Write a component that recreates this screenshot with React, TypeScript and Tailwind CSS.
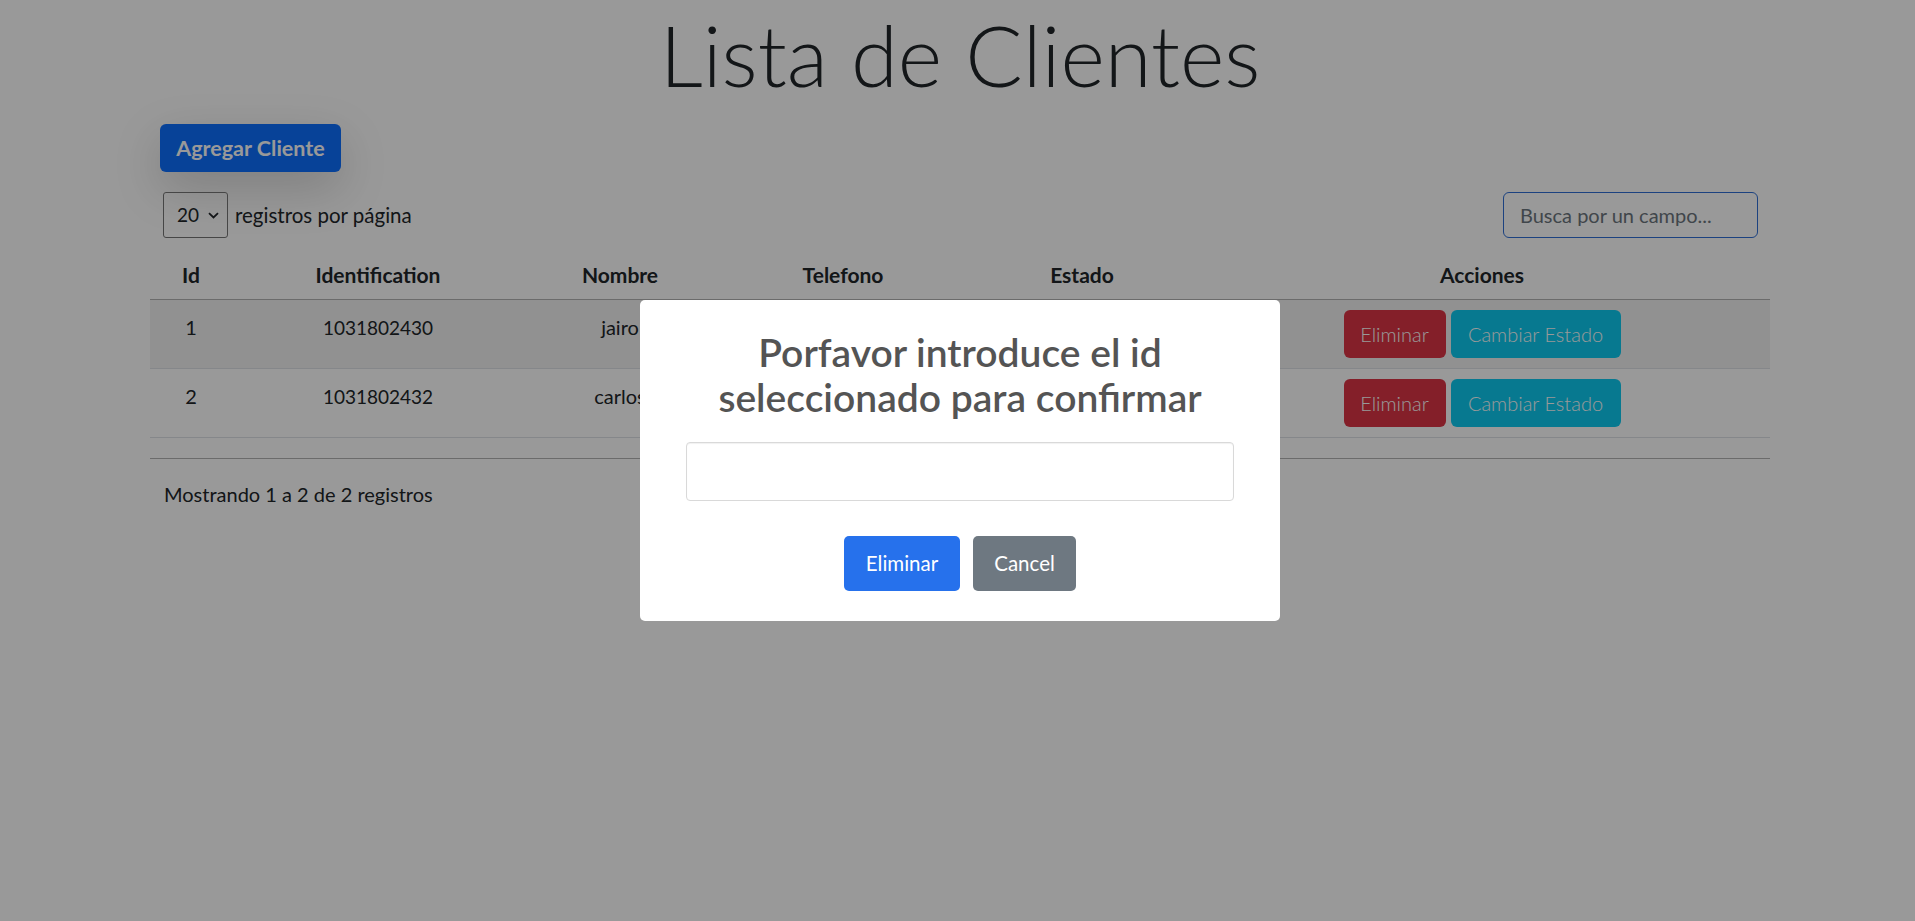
import React from 'react';

const rows = [
  { id: 1, ident: '1031802430', nombre: 'jairo' },
  { id: 2, ident: '1031802432', nombre: 'carlos' },
];

const cols = 'grid grid-cols-[82px_292px_192px_254px_224px_576px]';

export default function App() {
  return (
    <div className="relative min-h-screen bg-white text-[#212529] [font-family:Lato,'Open_Sans',sans-serif]">
      <div className="ml-[150px] w-[1620px]">
        <h1 className="mt-[3px] text-center text-[85px] font-light leading-[102px] text-[#212529]">
          Lista de Clientes
        </h1>

        <button className="ml-[10px] mt-[19px] h-[48px] w-[181px] rounded-[6px] bg-[#0d6efd] text-[21.5px] font-bold text-white shadow-[0_1rem_3rem_rgba(0,0,0,0.175)]">
          Agregar Cliente
        </button>

        <div className="mt-[20px] flex items-center justify-between pl-[13px] pr-[12px]">
          <div className="flex items-center gap-[7px]">
            <div className="flex h-[46px] w-[65px] items-center justify-between rounded-[3px] border border-[#767676] pl-[13px] pr-[8px] text-[19px]">
              <span>20</span>
              <svg width="11" height="7" viewBox="0 0 11 7" fill="none">
                <path d="M1 1.2 L5.5 5.5 L10 1.2" stroke="#212529" strokeWidth="1.8" />
              </svg>
            </div>
            <span className="text-[20.5px]">registros por página</span>
          </div>
          <div className="flex h-[46px] w-[255px] items-center rounded-[6px] border border-[#2f6fd6] px-[16px] text-[20px] text-[#6c757d]">
            Busca por un campo...
          </div>
        </div>

        <div className={`${cols} mt-[10px] h-[52px] border-b border-[#b3b3b3] pt-[13px] text-center text-[21px] font-bold leading-[28px]`}>
          <div>Id</div>
          <div>Identification</div>
          <div>Nombre</div>
          <div>Telefono</div>
          <div>Estado</div>
          <div>Acciones</div>
        </div>

        {rows.map((r, i) => (
          <div
            key={r.id}
            className={`${cols} h-[69px] border-b border-[#dee2e6] text-center text-[20px] leading-[27px] ${i === 0 ? 'bg-[#f2f2f2]' : 'bg-white'}`}
          >
            <div className="pt-[14px]">{r.id}</div>
            <div className="pt-[14px] text-[19px]">{r.ident}</div>
            <div className="pt-[14px]">{r.nombre}</div>
            <div className="pt-[14px]" />
            <div className="pt-[14px]" />
            <div className="flex justify-center gap-[5px] pt-[10px]">
              <button className="h-[48px] w-[102px] rounded-[6px] bg-[#dc3545] text-[20px] font-light text-white">
                Eliminar
              </button>
              <button className="h-[48px] w-[170px] rounded-[6px] bg-[#0dcaf0] text-[20px] font-light text-white">
                Cambiar Estado
              </button>
            </div>
          </div>
        ))}

        <div className="h-[21px] border-b border-[#b3b3b3]" />

        <div className="mt-[22px] pl-[14px] text-[20px] leading-[27px]">Mostrando 1 a 2 de 2 registros</div>
      </div>

      <div className="fixed inset-0 bg-black/40" />

      <div className="fixed inset-0 flex items-center justify-center pl-[5px]">
        <div className="w-[640px] rounded-[5px] bg-white pb-[30px] text-center">
          <h2 className="px-[16px] pt-[30px] text-[39px] font-semibold leading-[45px] text-[#545454]">
            Porfavor introduce el id
            <br />
            seleccionado para confirmar
          </h2>
          <div className="mx-auto mt-[22px] h-[59px] w-[548px] rounded-[4px] border border-[#d9d9d9] shadow-[inset_0_1px_1px_rgba(0,0,0,0.06)]" />
          <div className="mt-[35px] flex justify-center gap-[13px]">
            <button className="h-[55px] w-[116px] rounded-[5px] bg-[#2671ec] text-[20.5px] text-white">Eliminar</button>
            <button className="h-[55px] w-[103px] rounded-[5px] bg-[#6e7881] text-[20.5px] text-white">Cancel</button>
          </div>
        </div>
      </div>
    </div>
  );
}
